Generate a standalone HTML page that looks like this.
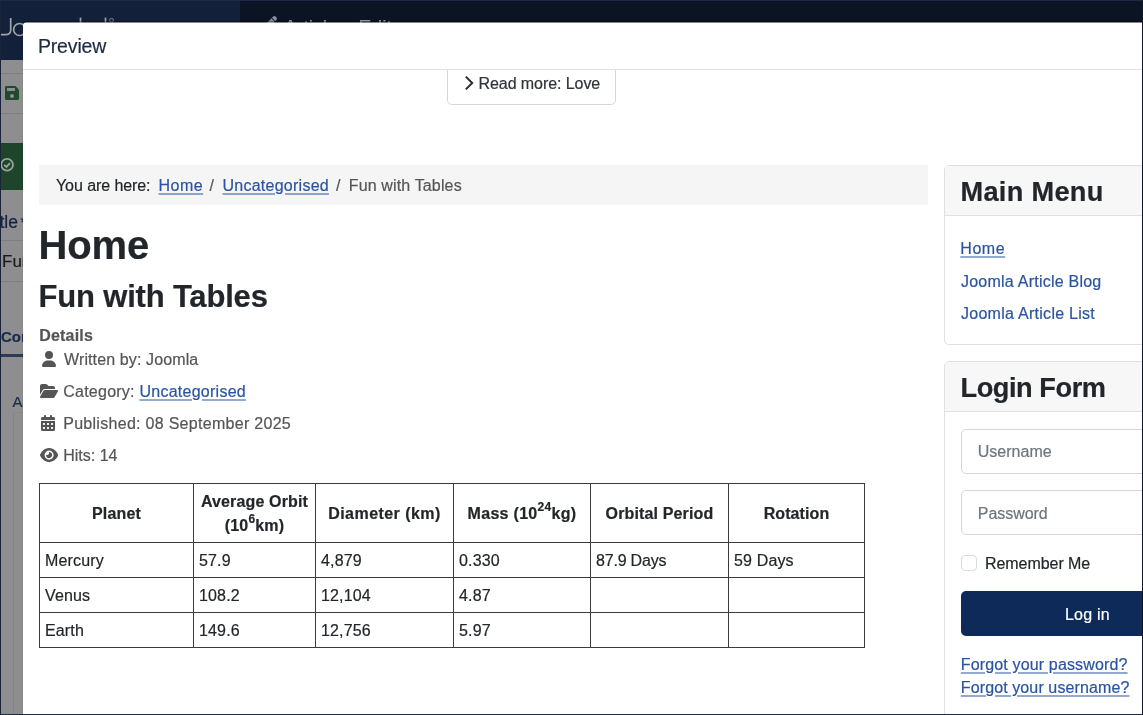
<!DOCTYPE html>
<html><head><meta charset="utf-8">
<style>
*{box-sizing:border-box;margin:0;padding:0}
html,body{width:1143px;height:715px;overflow:hidden;background:#8e8e90;font-family:"Liberation Sans",sans-serif;}
.a{position:absolute;white-space:nowrap}
body{-webkit-font-smoothing:antialiased}
.gs{will-change:transform}
.gs .a, .gs td, .gs th{-webkit-text-stroke:0.2px currentColor}
svg{display:block}
a{color:#2a54a2;text-decoration:underline;text-underline-offset:2px;text-decoration-thickness:2px;text-decoration-color:rgba(42,84,162,.5)}
.card{border:1px solid #dfe0e1;border-radius:5px;background:#fff}
.chead{background:#f7f7f7;border-bottom:1px solid #dfe0e1}
.inp{border:1px solid #d5d8db;border-radius:5px;background:#fff}
table{border-collapse:collapse;position:absolute;left:39px;top:483px;table-layout:fixed;letter-spacing:0.15px}
td,th{border:1px solid #3b3b3b;font-size:16px;padding:0 5px;vertical-align:middle;text-align:left;color:#22262a;white-space:nowrap}
th{text-align:center;font-weight:bold;height:59px;line-height:24px;padding:2px 4px 0}
td{height:35px;padding-top:1px}
</style></head><body>
<div class="gs" style="position:absolute;left:0;top:0;width:1143px;height:715px;overflow:hidden">
<div class="a" style="left:0;top:0;width:240px;height:60px;background:#13203a"></div>
<div class="a" style="left:240px;top:0;width:903px;height:60px;background:#0a1424"></div>
<svg class="a" style="left:0;top:0" width="241" height="60" viewBox="0 0 241 60"><g fill="none" stroke="#a0a5ad" stroke-width="1.7"><path d="M10.7 18V30Q10.7 34.6 6 34.6H1"/><circle cx="19.6" cy="29.5" r="6"/><path d="M80.5 17.6V40"/><path d="M105.5 17.6V40"/></g><circle cx="111.5" cy="20.3" r="1.9" fill="none" stroke="#8a909a" stroke-width="0.9"/></svg>
<svg class="a" style="left:264px;top:15.5px" width="13" height="13" viewBox="0 0 512 512"><path fill="#8a9099" d="M410.3 231l11.3-11.3-33.9-33.9-62.1-62.1L291.7 89.8l-11.3 11.3-22.6 22.6L58.6 322.9c-10.4 10.4-18 23.3-22.2 37.4L1 480.7c-2.5 8.4-.2 17.5 6.1 23.7s15.3 8.5 23.7 6.1l120.3-35.4c14.1-4.2 27-11.8 37.4-22.2L387.7 253.7 410.3 231zM362.7 18.7L348.3 33.2 325.7 55.8 314.3 67.1l33.9 33.9 62.1 62.1 33.9 33.9 11.3-11.3 22.6-22.6 14.5-14.5c25-25 25-65.5 0-90.5L453.3 18.7c-25-25-65.5-25-90.5 0z"/></svg>
<div class="a" style="left:284.00px;top:17.15px;font-size:19.2px;line-height:19.2px;font-weight:400;color:#969ba3;letter-spacing:0.1px;font-weight:500;">Articles: Edit</div>
<div class="a" style="left:0;top:73px;width:23px;height:1px;background:#808083"></div>
<div class="a" style="left:0;top:113px;width:23px;height:1px;background:#808083"></div>
<svg class="a" style="left:5px;top:86px" width="14" height="14" viewBox="0 0 448 448"><path fill="#1f4a2c" d="M48 0C21.5 0 0 21.5 0 48V400c0 26.5 21.5 48 48 48H400c26.5 0 48-21.5 48-48V134.6c0-12.7-5.1-24.9-14.1-33.9L347.3 14.1C338.3 5.1 326.1 0 313.4 0H48zm16 64h256v96H64V64zM160 320a64 64 0 1 1 128 0 64 64 0 1 1 -128 0z"/></svg>
<div class="a" style="left:0;top:143px;width:23px;height:47px;background:#1e4429"></div>
<svg class="a" style="left:0;top:157px" width="16" height="16" viewBox="0 0 16 16"><circle cx="7.1" cy="7.7" r="5.9" fill="none" stroke="#97a69a" stroke-width="1.8"/><polyline points="4.2,7.9 6.4,10 9.9,6.2" fill="none" stroke="#97a69a" stroke-width="1.9"/></svg>
<div class="a" style="left:-14.50px;top:214.49px;font-size:17.5px;line-height:17.5px;font-weight:400;color:#13223f;letter-spacing:0.0px;">Title</div>
<div class="a" style="left:20.50px;top:214.30px;font-size:15px;line-height:15px;font-weight:400;color:#13223f;letter-spacing:0.0px;">*</div>
<div class="a" style="left:0;top:240px;width:23px;height:1px;background:#808083"></div>
<div class="a" style="left:2.00px;top:253.31px;font-size:17px;line-height:17px;font-weight:400;color:#1c1c1c;letter-spacing:0.0px;">Fun</div>
<div class="a" style="left:0;top:281px;width:23px;height:1px;background:#808083"></div>
<div class="a" style="left:1.00px;top:328.60px;font-size:15px;line-height:15px;font-weight:700;color:#1a2b4b;letter-spacing:0.0px;">Con</div>
<div class="a" style="left:0;top:354px;width:23px;height:3px;background:#2b3a55"></div>
<div class="a" style="left:12.50px;top:393.60px;font-size:15px;line-height:15px;font-weight:400;color:#1a2b4b;letter-spacing:0.0px;">A</div>
<div class="a" style="left:13px;top:412px;width:12px;height:320px;border-left:1px solid #848486;border-top:1px solid #88888a"></div>
<div class="a" style="left:23px;top:22px;width:1130px;height:700px;background:#fff;border-radius:3px;box-shadow:0 -1px 1px rgba(0,0,0,.35);transform:translateY(0.5px)"></div>
<div class="a" style="left:37.90px;top:37.29px;font-size:19.5px;line-height:19.5px;font-weight:400;color:#1c2b45;letter-spacing:-0.15px;">Preview</div>
<div class="a" style="left:23px;top:69px;width:1120px;height:1px;background:#e2e2e2"></div>
<div class="a gs" style="left:0;top:0;width:1143px;height:715px;clip-path:inset(70px 1px 1px 23px)">
<div class="a" style="left:447px;top:50px;width:169px;height:55px;border:1px solid #d3d6da;border-radius:5px"></div>
<svg class="a" style="left:463px;top:75px" width="12" height="16" viewBox="0 0 12 16"><polyline points="2.8,1.6 9.2,8 2.8,14.4" fill="none" stroke="#2a2e33" stroke-width="2"/></svg>
<div class="a" style="left:478.50px;top:75.66px;font-size:16px;line-height:16px;font-weight:400;color:#2f3338;letter-spacing:-0.07px;">Read more: Love</div>
<div class="a" style="left:39px;top:165px;width:889px;height:40px;background:#f5f5f5"></div>
<div class="a" style="left:56.00px;top:178.46px;font-size:16px;line-height:16px;font-weight:400;color:#22262a;letter-spacing:-0.08px;">You are here:</div>
<div class="a" style="left:158.50px;top:178.46px;font-size:16px;line-height:16px;font-weight:400;color:#2a54a2;letter-spacing:0.5px;"><a href="#">Home</a></div>
<div class="a" style="left:209.50px;top:178.46px;font-size:16px;line-height:16px;font-weight:400;color:#555;letter-spacing:0.0px;">/</div>
<div class="a" style="left:222.50px;top:178.46px;font-size:16px;line-height:16px;font-weight:400;color:#2a54a2;letter-spacing:0.25px;"><a href="#">Uncategorised</a></div>
<div class="a" style="left:336.00px;top:178.46px;font-size:16px;line-height:16px;font-weight:400;color:#555;letter-spacing:0.0px;">/</div>
<div class="a" style="left:348.80px;top:178.46px;font-size:16px;line-height:16px;font-weight:400;color:#555;letter-spacing:0.14px;">Fun with Tables</div>
<div class="a" style="left:38.50px;top:224.84px;font-size:40px;line-height:40px;font-weight:700;color:#22262a;letter-spacing:-0.13px;">Home</div>
<div class="a" style="left:38.50px;top:280.86px;font-size:31px;line-height:31px;font-weight:700;color:#22262a;letter-spacing:-0.18px;">Fun with Tables</div>
<div class="a" style="left:39.20px;top:328.26px;font-size:16px;line-height:16px;font-weight:700;color:#555555;letter-spacing:0.2px;">Details</div>
<div class="a" style="left:64.00px;top:352.26px;font-size:16px;line-height:16px;font-weight:400;color:#555555;letter-spacing:0.12px;">Written by: Joomla</div>
<div class="a" style="left:63.20px;top:384.26px;font-size:16px;line-height:16px;font-weight:400;color:#555555;letter-spacing:0.25px;">Category: <a href="#">Uncategorised</a></div>
<div class="a" style="left:63.20px;top:416.26px;font-size:16px;line-height:16px;font-weight:400;color:#555555;letter-spacing:0.29px;">Published: 08 September 2025</div>
<div class="a" style="left:63.20px;top:448.26px;font-size:16px;line-height:16px;font-weight:400;color:#555555;letter-spacing:0px;">Hits: 14</div>
<svg class="a" style="left:42px;top:351px" width="14" height="16" viewBox="0 0 448 512"><path fill="#555" d="M224 256A128 128 0 1 0 224 0a128 128 0 1 0 0 256zm-45.7 48C79.8 304 0 383.8 0 482.3C0 498.7 13.3 512 29.7 512H418.3c16.4 0 29.7-13.3 29.7-29.7C448 383.8 368.2 304 269.7 304H178.3z"/></svg>
<svg class="a" style="left:39.5px;top:383px" width="18" height="16" viewBox="0 0 576 512"><path fill="#555" d="M88.7 223.8L0 375.8V96C0 60.7 28.7 32 64 32H181.5c17 0 33.3 6.7 45.3 18.7l26.5 26.5c12 12 28.3 18.7 45.3 18.7H416c35.3 0 64 28.7 64 64v32H144c-22.8 0-43.8 12.1-55.3 31.8zm27.6 16.1C122.1 230 132.6 224 144 224H544c11.5 0 22 6.1 27.700 16.1s5.7 22.2-.1 32.1l-112 192C453.9 474 443.4 480 432 480H32c-11.5 0-22-6.1-27.7-16.1s-5.7-22.2 .1-32.1l112-192z"/></svg>
<svg class="a" style="left:41px;top:415px" width="14" height="16" viewBox="0 0 448 512"><path fill="#555" d="M128 0c17.7 0 32 14.3 32 32V64H288V32c0-17.7 14.3-32 32-32s32 14.3 32 32V64h48c26.5 0 48 21.5 48 48v48H0V112C0 85.5 21.5 64 48 64H96V32c0-17.7 14.3-32 32-32zM0 192H448V464c0 26.5-21.5 48-48 48H48c-26.5 0-48-21.5-48-48V192zm64 80v32c0 8.8 7.2 16 16 16h32c8.8 0 16-7.2 16-16V272c0-8.8-7.2-16-16-16H80c-8.8 0-16 7.2-16 16zm128 0v32c0 8.8 7.2 16 16 16h32c8.8 0 16-7.2 16-16V272c0-8.8-7.2-16-16-16H208c-8.8 0-16 7.2-16 16zm144-16c-8.8 0-16 7.2-16 16v32c0 8.8 7.2 16 16 16h32c8.8 0 16-7.2 16-16V272c0-8.8-7.2-16-16-16H336zM64 400v32c0 8.8 7.2 16 16 16h32c8.8 0 16-7.2 16-16V400c0-8.8-7.2-16-16-16H80c-8.8 0-16 7.2-16 16zm144-16c-8.8 0-16 7.2-16 16v32c0 8.8 7.2 16 16 16h32c8.8 0 16-7.2 16-16V400c0-8.8-7.2-16-16-16H208zm112 16v32c0 8.8 7.2 16 16 16h32c8.8 0 16-7.2 16-16V400c0-8.8-7.2-16-16-16H336c-8.8 0-16 7.2-16 16z"/></svg>
<svg class="a" style="left:39.8px;top:446.6px" width="18.2" height="16.2" viewBox="0 0 576 512"><path fill="#555" d="M288 32c-80.8 0-145.5 36.8-192.6 80.6C48.6 156 17.3 208 2.5 243.7c-3.3 7.9-3.3 16.7 0 24.6C17.3 304 48.6 356 95.4 399.4C142.5 443.2 207.2 480 288 480s145.5-36.8 192.6-80.6c46.8-43.5 78.1-95.4 93-131.1c3.3-7.9 3.3-16.7 0-24.6c-14.9-35.7-46.2-87.7-93-131.1C433.5 68.8 368.8 32 288 32zM144 256a144 144 0 1 1 288 0 144 144 0 1 1 -288 0zm144-64c0 35.3-28.7 64-64 64c-7.1 0-13.9-1.2-20.3-3.3c-5.5-1.8-11.9 1.6-11.7 7.4c.3 6.9 1.3 13.8 3.2 20.7c13.7 51.2 66.4 81.6 117.6 67.9s81.6-66.4 67.9-117.6c-11.1-41.5-47.8-69.4-88.6-71.1c-5.8-.2-9.2 6.1-7.4 11.7c2.1 6.4 3.3 13.2 3.3 20.3z"/></svg>
<table>
<colgroup><col style="width:154px"><col style="width:122px"><col style="width:138px"><col style="width:137px"><col style="width:138px"><col style="width:136px"></colgroup>
<tr><th style="letter-spacing:0.2px">Planet</th><th>Average Orbit<br>(10<sup style="font-size:12px;line-height:0;vertical-align:8px">6</sup>km)</th><th style="letter-spacing:0.45px">Diameter (km)</th><th style="letter-spacing:0.3px">Mass (10<sup style="font-size:12px;line-height:0;vertical-align:8px">24</sup>kg)</th><th style="letter-spacing:0.14px">Orbital Period</th><th style="letter-spacing:0.1px">Rotation</th></tr>
<tr><td>Mercury</td><td>57.9</td><td>4,879</td><td>0.330</td><td style="letter-spacing:-0.2px">87.9 Days</td><td>59 Days</td></tr>
<tr><td>Venus</td><td>108.2</td><td>12,104</td><td>4.87</td><td></td><td></td></tr>
<tr><td>Earth</td><td>149.6</td><td>12,756</td><td>5.97</td><td></td><td></td></tr>
</table>
<div class="a card" style="left:944px;top:165px;width:300px;height:180px"></div>
<div class="a chead" style="left:945px;top:166px;width:298px;height:50px;border-radius:4px 4px 0 0"></div>
<div class="a" style="left:960.50px;top:177.88px;font-size:27.2px;line-height:27.2px;font-weight:700;color:#22262a;letter-spacing:0.3px;">Main Menu</div>
<div class="a" style="left:960.30px;top:241.36px;font-size:16px;line-height:16px;font-weight:400;color:#2a54a2;letter-spacing:0.55px;"><a href="#">Home</a></div>
<div class="a" style="left:961.00px;top:273.66px;font-size:16px;line-height:16px;font-weight:400;color:#2a54a2;letter-spacing:0.23px;">Joomla Article Blog</div>
<div class="a" style="left:961.00px;top:305.76px;font-size:16px;line-height:16px;font-weight:400;color:#2a54a2;letter-spacing:0.27px;">Joomla Article List</div>
<div class="a card" style="left:944px;top:361px;width:300px;height:400px"></div>
<div class="a chead" style="left:945px;top:362px;width:298px;height:50px;border-radius:4px 4px 0 0"></div>
<div class="a" style="left:960.50px;top:374.48px;font-size:27.2px;line-height:27.2px;font-weight:700;color:#22262a;letter-spacing:-0.45px;">Login Form</div>
<div class="a inp" style="left:961px;top:429px;width:260px;height:45px"></div>
<div class="a" style="left:977.80px;top:444.46px;font-size:16px;line-height:16px;font-weight:400;color:#6d757e;letter-spacing:0px;">Username</div>
<div class="a inp" style="left:961px;top:490px;width:260px;height:45px"></div>
<div class="a" style="left:977.80px;top:506.16px;font-size:16px;line-height:16px;font-weight:400;color:#6d757e;letter-spacing:-0.04px;">Password</div>
<div class="a" style="left:961px;top:555px;width:16px;height:16px;border:1px solid #d8dbde;border-radius:4px"></div>
<div class="a" style="left:985.00px;top:556.46px;font-size:16px;line-height:16px;font-weight:400;color:#22262a;letter-spacing:-0.06px;">Remember Me</div>
<div class="a" style="left:961px;top:591px;width:252px;height:45px;background:#0e2a58;border-radius:5px"></div>
<div class="a" style="left:1065.00px;top:607.06px;font-size:16px;line-height:16px;font-weight:400;color:#fff;letter-spacing:0.2px;">Log in</div>
<div class="a" style="left:960.80px;top:656.86px;font-size:16px;line-height:16px;font-weight:400;color:#2a54a2;letter-spacing:0.15px;"><a href="#">Forgot your password?</a></div>
<div class="a" style="left:960.80px;top:680.46px;font-size:16px;line-height:16px;font-weight:400;color:#2a54a2;letter-spacing:0.11px;"><a href="#">Forgot your username?</a></div>
</div>
<div class="a" style="left:0;top:0;width:1143px;height:715px;border:1px solid #1b2a45;border-left-color:#18243a;border-right-color:#0c1626"></div>
</div></body></html>
